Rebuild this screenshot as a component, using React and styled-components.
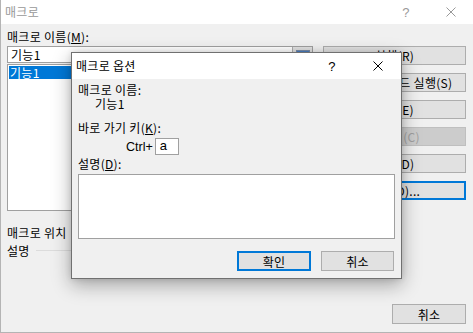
import React from "react";
import styled, { createGlobalStyle } from "styled-components";

const GlobalStyle = createGlobalStyle`
  html, body {
    margin: 0;
    padding: 0;
    background: #f0f0f0;
  }
  body {
    font-family: "Noto Sans CJK KR", "Noto Sans", sans-serif;
    font-size: 12px;
    letter-spacing: 0.3px;
    color: #000;
  }
  * {
    box-sizing: border-box;
  }
`;

const Window = styled.div`
  position: relative;
  width: 473px;
  height: 333px;
  display: flex;
  flex-direction: column;
  background: #f0f0f0;
  border-left: 1px solid #b4b4b4;
  border-bottom: 1px solid #b4b4b4;
  overflow: hidden;
`;

const TitleBar = styled.div`
  display: flex;
  align-items: center;
  justify-content: space-between;
  height: ${({ $height }) => $height}px;
  flex: none;
  background: #fff;
  color: ${({ $active }) => ($active ? "#000" : "#999")};
`;

const TitleText = styled.span`
  padding-left: ${({ $pad }) => $pad}px;
  line-height: 16px;
`;

const Controls = styled.div`
  display: flex;
  height: 100%;
`;

const CaptionButton = styled.div`
  width: ${({ $w }) => $w}px;
  display: flex;
  align-items: center;
  justify-content: center;
  font-family: "Liberation Sans", sans-serif;
  font-size: 13px;
`;

const CloseIcon = ({ color }) => (
  <svg width="10" height="10" viewBox="0 0 10 10">
    <path d="M0.5 0.5 L9.5 9.5 M9.5 0.5 L0.5 9.5" stroke={color} strokeWidth="1" />
  </svg>
);

const Body = styled.div`
  display: flex;
  gap: 10px;
  padding: 5px 7px 0 6px;
`;

const LeftColumn = styled.div`
  width: 306px;
  display: flex;
  flex-direction: column;
`;

const RightColumn = styled.div`
  width: 143px;
  display: flex;
  flex-direction: column;
  gap: 8px;
  padding-top: 17px;
`;

const Label = styled.div`
  height: ${({ $h }) => $h || 16}px;
  line-height: ${({ $h }) => $h || 16}px;
  margin-top: ${({ $mt }) => $mt || 0}px;
  padding-left: ${({ $indent }) => $indent || 0}px;
  white-space: nowrap;
`;

const NameBlock = styled.div`
  line-height: 14px;
  margin-top: 1px;
  white-space: nowrap;
`;

const NameValue = styled.span`
  display: inline-block;
  padding-left: 17px;
`;

const NameField = styled.div`
  position: relative;
  height: 17px;
  margin-top: 1px;
  background: #fff;
  border: 1px solid #a0a0a0;
  padding-left: 3px;
  line-height: 15px;
`;

const RefButton = styled.div`
  position: absolute;
  right: 0;
  top: 0;
  width: 20px;
  height: 15px;
  background: #e1e1e1;
  border-left: 1px solid #adadad;
  display: flex;
  align-items: center;
  justify-content: center;
`;

const ListBox = styled.div`
  height: 147px;
  margin-top: 1px;
  background: #fff;
  border: 1px solid #a0a0a0;
  padding: 1px;
`;

const ListItem = styled.div`
  height: 13px;
  line-height: 13px;
  padding-left: 1px;
  background: ${({ $selected }) => ($selected ? "#0078d7" : "transparent")};
  color: ${({ $selected }) => ($selected ? "#fff" : "#000")};
`;

const LocationRow = styled.div`
  display: flex;
  align-items: center;
  gap: 8px;
  height: 16px;
  margin-top: 13px;
  white-space: nowrap;
`;

const LocationSelect = styled.div`
  flex: 1;
  height: 17px;
  background: #e1e1e1;
  border: 1px solid #adadad;
`;

const GroupRow = styled.div`
  display: flex;
  align-items: center;
  gap: 6px;
  height: 16px;
  margin-top: 2px;
`;

const GroupLine = styled.div`
  flex: 1;
  border-top: 1px solid #dcdcdc;
`;

const Button = styled.div`
  height: ${({ $h }) => $h || 19}px;
  width: ${({ $w }) => ($w ? `${$w}px` : "100%")};
  display: flex;
  align-items: center;
  justify-content: center;
  white-space: nowrap;
  background: ${({ $disabled }) => ($disabled ? "#cccccc" : "#e1e1e1")};
  color: ${({ $disabled }) => ($disabled ? "#a0a0a0" : "#000")};
  border: ${({ $focused }) => ($focused ? "2px solid #0078d7" : "1px solid #adadad")};
  border-color: ${({ $disabled, $focused }) =>
    $focused ? "#0078d7" : $disabled ? "#bfbfbf" : "#adadad"};
`;

const Footer = styled.div`
  margin-top: auto;
  display: flex;
  justify-content: flex-end;
  padding: 0 7px 8px 0;
`;

const Dialog = styled.div`
  position: absolute;
  left: 70px;
  top: 52px;
  width: 331px;
  height: 227px;
  display: flex;
  flex-direction: column;
  background: #f0f0f0;
  border: 1px solid #707070;
  box-shadow: 0 6px 18px rgba(0, 0, 0, 0.32), 0 0 6px rgba(0, 0, 0, 0.12);
`;

const DialogBody = styled.div`
  display: flex;
  flex-direction: column;
  padding: 3px 6px 0 6px;
`;

const ShortcutRow = styled.div`
  display: flex;
  align-items: center;
  gap: 2px;
  margin-top: 3px;
  padding-left: 48px;
  height: 17px;
`;

const KeyField = styled.div`
  width: 24px;
  height: 17px;
  background: #fff;
  border: 1px solid #a0a0a0;
  padding-left: 4px;
  line-height: 14px;
  font-family: "Liberation Sans", sans-serif;
  font-size: 13px;
  letter-spacing: 0;
`;

const LatinText = styled.span`
  font-family: "Liberation Sans", sans-serif;
  font-size: 12.5px;
  letter-spacing: 0;
`;

const DescriptionBox = styled.div`
  height: 65px;
  margin-top: 3px;
  background: #fff;
  border: 1px solid #a0a0a0;
`;

const DialogButtons = styled.div`
  display: flex;
  justify-content: flex-end;
  gap: 10px;
  margin-top: 12px;
  padding-right: 1px;
`;

const RefIcon = () => (
  <svg width="14" height="10" viewBox="0 0 14 10">
    <rect x="0.5" y="0.5" width="13" height="9" fill="#fff" stroke="#7a8ca8" />
    <rect x="1" y="1" width="12" height="2" fill="#4a7fc1" />
    <path d="M3 5 H11 M3 7 H11" stroke="#9aa7b8" />
  </svg>
);

const macroButtons = [
  { label: "실행(R)" },
  { label: "한 단계씩 코드 실행(S)" },
  { label: "편집(E)" },
  { label: "만들기(C)", disabled: true },
  { label: "삭제(D)" },
  { label: "옵션(O)...", focused: true },
];

export default function App() {
  return (
    <>
      <GlobalStyle />
      <Window>
        <TitleBar $height={24}>
          <TitleText $pad={4}>매크로</TitleText>
          <Controls>
            <CaptionButton $w={46}>?</CaptionButton>
            <CaptionButton $w={44}>
              <CloseIcon color="#999" />
            </CaptionButton>
          </Controls>
        </TitleBar>

        <Body>
          <LeftColumn>
            <Label>
              매크로 이름(<u>M</u>):
            </Label>
            <NameField>
              기능1
              <RefButton>
                <RefIcon />
              </RefButton>
            </NameField>
            <ListBox>
              <ListItem $selected>기능1</ListItem>
            </ListBox>
            <LocationRow>
              <span>매크로 위치</span>
              <LocationSelect />
            </LocationRow>
            <GroupRow>
              <span>설명</span>
              <GroupLine />
            </GroupRow>
          </LeftColumn>

          <RightColumn>
            {macroButtons.map((b) => (
              <Button key={b.label} $disabled={b.disabled} $focused={b.focused}>
                {b.label}
              </Button>
            ))}
          </RightColumn>
        </Body>

        <Footer>
          <Button $w={74} $h={20}>
            취소
          </Button>
        </Footer>

        <Dialog>
          <TitleBar $height={26} $active>
            <TitleText $pad={4}>매크로 옵션</TitleText>
            <Controls>
              <CaptionButton $w={46}>?</CaptionButton>
              <CaptionButton $w={46}>
                <CloseIcon color="#000" />
              </CaptionButton>
            </Controls>
          </TitleBar>
          <DialogBody>
            <NameBlock>
              매크로 이름:
              <br />
              <NameValue>기능1</NameValue>
            </NameBlock>
            <Label $h={14} $mt={10}>
              바로 가기 키(<u>K</u>):
            </Label>
            <ShortcutRow>
              <LatinText>Ctrl+</LatinText>
              <KeyField>a</KeyField>
            </ShortcutRow>
            <Label $h={14} $mt={2}>
              설명(<u>D</u>):
            </Label>
            <DescriptionBox />
            <DialogButtons>
              <Button $w={74} $h={20} $focused>
                확인
              </Button>
              <Button $w={73} $h={20}>
                취소
              </Button>
            </DialogButtons>
          </DialogBody>
        </Dialog>
      </Window>
    </>
  );
}
